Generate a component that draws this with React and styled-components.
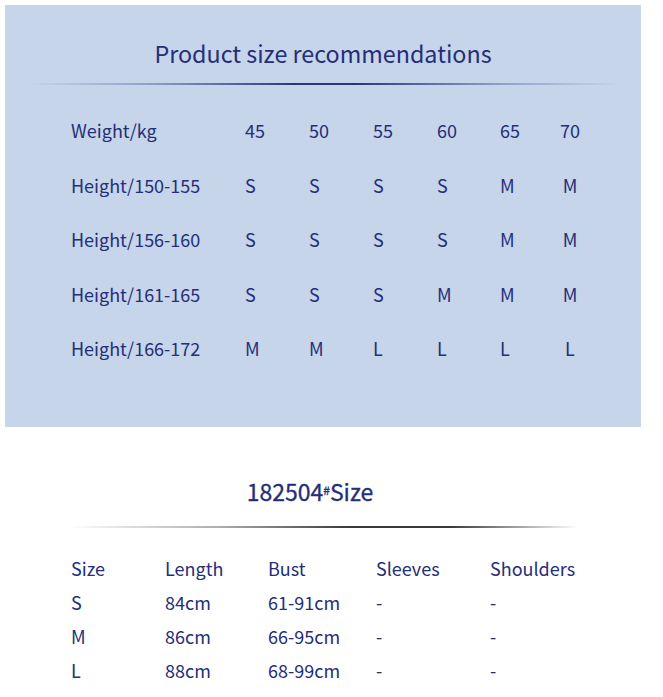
import React from "react";
import styled, { createGlobalStyle } from "styled-components";

const Global = createGlobalStyle`
  html, body { margin: 0; padding: 0; background: #ffffff; }
  body { font-family: "Noto Sans CJK SC", "Noto Sans", sans-serif; color: #252e78; }
`;

const Page = styled.div`
  width: 636px;
  margin: 5px 0 0 5px;
  display: flex;
  flex-direction: column;
`;

const Panel = styled.section`
  background: #c6d5ea;
  padding: 33px 0 51px 66px;
  display: flex;
  flex-direction: column;
`;

const Title = styled.h1`
  margin: 0;
  font-size: 23.3px;
  line-height: 30px;
  font-weight: 400;
  text-align: center;
  color: #252e78;
  padding-right: ${(p) => p.$shift || 0}px;
`;

const Divider = styled.div`
  height: 2px;
  width: ${(p) => p.$width}px;
  margin: ${(p) => p.$mt}px 0 0 ${(p) => p.$ml}px;
  background: ${(p) => p.$bg};
`;

const Grid = styled.div`
  display: grid;
  grid-template-columns: 174px 64px 64px 64px 63px 58px 24px;
  grid-auto-rows: 54.5px;
  align-items: center;
  margin-top: ${(p) => p.$mt}px;
  font-size: 18px;
`;

const Cell = styled.div`
  text-align: ${(p) => p.$align || "left"};
  white-space: nowrap;
  line-height: 24px;
`;

const Lower = styled.section`
  display: flex;
  flex-direction: column;
  padding-left: 66px;
`;

const SubTitle = styled.h2`
  margin: 50px 0 0 -66px;
  font-size: 23px;
  line-height: 28px;
  font-weight: 400;
  text-align: center;
  padding-right: 26px;
  color: #252e78;
  -webkit-text-stroke: 0.3px #252e78;
  sup {
    font-size: 12px;
    vertical-align: top;
    position: relative;
    top: -1px;
  }
`;

const SizeGrid = styled.div`
  display: grid;
  grid-template-columns: 94px 103px 108px 114px 100px;
  grid-auto-rows: 34px;
  align-items: center;
  margin-top: 23px;
  font-size: 18px;
`;

const weights = ["45", "50", "55", "60", "65", "70"];
const rows = [
  ["Height/150-155", ["S", "S", "S", "S", "M", "M"]],
  ["Height/156-160", ["S", "S", "S", "S", "M", "M"]],
  ["Height/161-165", ["S", "S", "S", "M", "M", "M"]],
  ["Height/166-172", ["M", "M", "L", "L", "L", "L"]],
];

const sizes = [
  ["Size", "Length", "Bust", "Sleeves", "Shoulders"],
  ["S", "84cm", "61-91cm", "-", "-"],
  ["M", "86cm", "66-95cm", "-", "-"],
  ["L", "88cm", "68-99cm", "-", "-"],
];

export default function App() {
  return (
    <>
      <Global />
      <Page>
        <Panel>
          <Title $shift={66}>Product size recommendations</Title>
          <Divider
            $width={590}
            $mt={15}
            $ml={-41}
            $bg="linear-gradient(to right, rgba(37,46,120,0) 0%, rgba(80,95,160,0.45) 20%, #2a3582 45%, #2a3582 55%, rgba(80,95,160,0.45) 80%, rgba(37,46,120,0) 100%)"
          />
          <Grid $mt={18}>
            <Cell>Weight/kg</Cell>
            {weights.map((w, i) => (
              <Cell key={w} $align={i === 5 ? "center" : "left"}>{w}</Cell>
            ))}
            {rows.map(([label, vals]) => (
              <React.Fragment key={label}>
                <Cell>{label}</Cell>
                {vals.map((v, i) => (
                  <Cell key={i} $align={i === 5 ? "center" : "left"}>{v}</Cell>
                ))}
              </React.Fragment>
            ))}
          </Grid>
        </Panel>
        <Lower>
          <SubTitle>
            182504<sup>#</sup>Size
          </SubTitle>
          <Divider
            $width={510}
            $mt={21}
            $ml={-3}
            $bg="linear-gradient(to right, rgba(60,60,60,0) 0%, rgba(90,90,90,0.5) 30%, #3a3a3a 55%, #3a3a3a 75%, rgba(60,60,60,0) 100%)"
          />
          <SizeGrid>
            {sizes.map((r, ri) =>
              r.map((c, ci) => <Cell key={ri + "-" + ci}>{c}</Cell>)
            )}
          </SizeGrid>
        </Lower>
      </Page>
    </>
  );
}
